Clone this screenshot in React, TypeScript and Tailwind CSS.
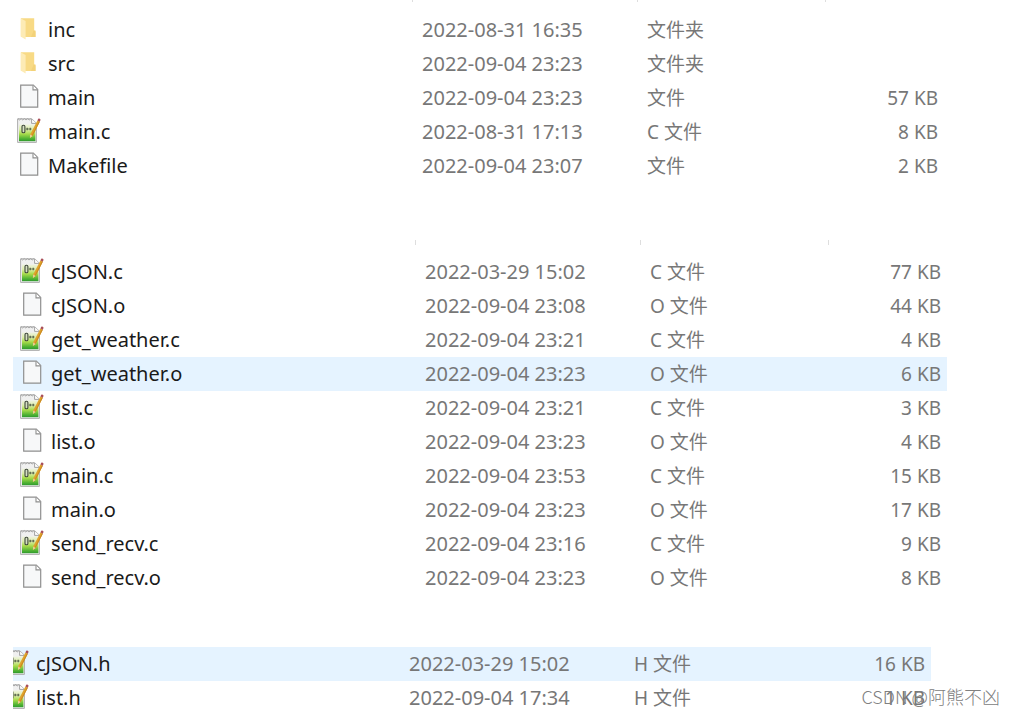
import clsx from "clsx";

type FileKind = "folder" | "file" | "source";

interface FileEntry {
  name: string;
  modified: string;
  type: string;
  size?: string;
  kind: FileKind;
  selected?: boolean;
}

const projectFiles: FileEntry[] = [
  { name: "inc", modified: "2022-08-31 16:35", type: "文件夹", kind: "folder" },
  { name: "src", modified: "2022-09-04 23:23", type: "文件夹", kind: "folder" },
  { name: "main", modified: "2022-09-04 23:23", type: "文件", size: "57 KB", kind: "file" },
  { name: "main.c", modified: "2022-08-31 17:13", type: "C 文件", size: "8 KB", kind: "source" },
  { name: "Makefile", modified: "2022-09-04 23:07", type: "文件", size: "2 KB", kind: "file" },
];

const sourceFiles: FileEntry[] = [
  { name: "cJSON.c", modified: "2022-03-29 15:02", type: "C 文件", size: "77 KB", kind: "source" },
  { name: "cJSON.o", modified: "2022-09-04 23:08", type: "O 文件", size: "44 KB", kind: "file" },
  { name: "get_weather.c", modified: "2022-09-04 23:21", type: "C 文件", size: "4 KB", kind: "source" },
  { name: "get_weather.o", modified: "2022-09-04 23:23", type: "O 文件", size: "6 KB", kind: "file", selected: true },
  { name: "list.c", modified: "2022-09-04 23:21", type: "C 文件", size: "3 KB", kind: "source" },
  { name: "list.o", modified: "2022-09-04 23:23", type: "O 文件", size: "4 KB", kind: "file" },
  { name: "main.c", modified: "2022-09-04 23:53", type: "C 文件", size: "15 KB", kind: "source" },
  { name: "main.o", modified: "2022-09-04 23:23", type: "O 文件", size: "17 KB", kind: "file" },
  { name: "send_recv.c", modified: "2022-09-04 23:16", type: "C 文件", size: "9 KB", kind: "source" },
  { name: "send_recv.o", modified: "2022-09-04 23:23", type: "O 文件", size: "8 KB", kind: "file" },
];

const headerFiles: FileEntry[] = [
  { name: "cJSON.h", modified: "2022-03-29 15:02", type: "H 文件", size: "16 KB", kind: "source", selected: true },
  { name: "list.h", modified: "2022-09-04 17:34", type: "H 文件", size: "1 KB", kind: "source" },
];

function FolderIcon() {
  return (
    <svg className="h-[30px] w-6 shrink-0" viewBox="0 0 24 30" fill="none">
      <path d="M4 3.2h13.2v12.3l1.3 1V22H4z" fill="#f8da85" />
      <path d="M16.6 15.5h1.9V22H14z" fill="#f3d279" />
      <path d="M3.6 3.2 8.6 6v18.6L3.6 21.4z" fill="#fdebb5" />
    </svg>
  );
}

function BlankFileIcon() {
  return (
    <svg className="h-[30px] w-6 shrink-0" viewBox="0 0 24 30" fill="none">
      <path d="M3.7 2.2h12.6l4.4 4.4v17.6h-17z" fill="#f7f8f9" stroke="#8f8f8f" strokeWidth="1.2" />
      <path d="M16 2.4v4.5h4.5" fill="#fff" stroke="#8f8f8f" strokeWidth="1.1" />
    </svg>
  );
}

// Notepad++ document: torn page, green fade, pencil
function SourceFileIcon() {
  return (
    <svg className="h-[30px] w-6 shrink-0" viewBox="0 0 24 30" fill="none">
      <defs>
        <linearGradient id="npp-fade" x1="0" y1="7" x2="0" y2="25" gradientUnits="userSpaceOnUse">
          <stop offset="0" stopColor="#f1f4e6" />
          <stop offset="0.3" stopColor="#dcedaa" />
          <stop offset="0.55" stopColor="#a9dc4c" />
          <stop offset="0.8" stopColor="#55b534" />
          <stop offset="1" stopColor="#23922c" />
        </linearGradient>
      </defs>
      <path d="M.6 1.8h14.2l4.6 4.4v19.2H.6z" fill="#f0f0f0" stroke="#a5a5a5" strokeWidth="0.9" />
      <path d="M1 1.6 2.6 3l1.6-1.4L5.8 3l1.6-1.4L9 3l1.6-1.4L12.2 3l1.6-1.4" stroke="#a0a0a0" strokeWidth="0.9" />
      <path d="M2 7.5h16.4v16.7H2z" fill="url(#npp-fade)" />
      <path d="M14.6 2v4.4h4.6" fill="#fff" stroke="#999" strokeWidth="0.9" />
      <rect x="5" y="8.2" width="2.9" height="7.6" rx="1.3" fill="#d5dfc2" stroke="#3f473b" strokeWidth="1.1" />
      <path d="M8.6 12h6" stroke="#6d7a5e" strokeWidth="0.9" />
      <path d="M10.2 10.8v2.4M13.2 10.8v2.4" stroke="#4b5742" strokeWidth="1.1" />
      <path d="m20.4 3.4 2.4 1.3-7.2 14.2-2.7 2 .3-3.3z" fill="#e0a32c" />
      <path d="m22.8 4.7-7.2 14.2-.9-.5 7.2-14.2z" fill="#c98a22" />
      <path d="m13.2 17.6 2.4 1.3-2.7 2z" fill="#e8cf9a" />
      <path d="m20.4 3.4.8-1.6q1.2-1 2.4.9l-.8 2z" fill="#a9505a" />
    </svg>
  );
}

const iconMap = {
  folder: FolderIcon,
  file: BlankFileIcon,
  source: SourceFileIcon,
};

interface FileListProps {
  files: FileEntry[];
  className?: string;
  dividers?: "short" | "full";
  clipped?: boolean;
}

function FileList({ files, className, dividers, clipped = false }: FileListProps) {
  return (
    <div className={className}>
      <table className="w-full table-fixed border-collapse">
        <colgroup>
          <col />
          <col className="w-[225px]" />
          <col className="w-[188px]" />
          <col className="w-[119px]" />
        </colgroup>
        {dividers ? (
          <thead>
            <tr>
              <td />
              {["modified", "type", "size"].map((column) => (
                <td key={column} className={clsx("p-0 align-top", dividers === "full" ? "h-[15px]" : "h-[13px]")}>
                  <div className={clsx("w-px bg-[#dedede]", dividers === "full" ? "h-[5px]" : "h-0.5")} />
                </td>
              ))}
            </tr>
          </thead>
        ) : null}
        <tbody>
          {files.map((file) => {
            const Icon = iconMap[file.kind];

            return (
              <tr key={file.name} className={clsx("h-[34px]", file.selected && "bg-[#e5f3ff]")}>
                <td className="p-0">
                  <div className={clsx("flex items-center gap-[7px]", !clipped && "pl-[7px]")}>
                    {clipped ? (
                      <div className="flex w-4 justify-end overflow-hidden">
                        <Icon />
                      </div>
                    ) : (
                      <Icon />
                    )}
                    <span className="text-[20px] text-[#1a1a1a]">{file.name}</span>
                  </div>
                </td>
                <td className="py-0 pl-[10px] text-[20px]">{file.modified}</td>
                <td className="py-0 pl-[10px]">{file.type}</td>
                <td className="py-0 pr-[6px] text-right">{file.size}</td>
              </tr>
            );
          })}
        </tbody>
      </table>
    </div>
  );
}

export default function App() {
  return (
    <main className="relative overflow-hidden bg-white font-['Noto_Sans','Noto_Sans_CJK_SC',sans-serif] text-[19px] leading-[30px] whitespace-nowrap text-[#777777]">
      <FileList files={projectFiles} dividers="short" className="mr-[69px] ml-[10px]" />
      <FileList files={sourceFiles} dividers="full" className="mt-[57px] mr-[66px] ml-[13px]" />
      <FileList files={headerFiles} clipped className="mt-[52px] mr-[82px] ml-[13px]" />
      <div className="absolute right-[13px] bottom-1 font-['Noto_Sans_CJK_SC',sans-serif] text-[18px] font-light text-[#808080]">
        CSDN @阿熊不凶
      </div>
    </main>
  );
}
